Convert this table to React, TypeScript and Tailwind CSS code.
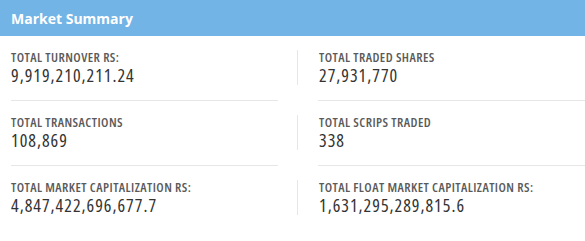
const rows = [
  [
    ["TOTAL TURNOVER RS:", "9,919,210,211.24"],
    ["TOTAL TRADED SHARES", "27,931,770"],
  ],
  [
    ["TOTAL TRANSACTIONS", "108,869"],
    ["TOTAL SCRIPS TRADED", "338"],
  ],
  [
    ["TOTAL MARKET CAPITALIZATION RS:", "4,847,422,696,677.7"],
    ["TOTAL FLOAT MARKET CAPITALIZATION RS:", "1,631,295,289,815.6"],
  ],
] as const;

function Stat({ label, value }: { label: string; value: string }) {
  return (
    <>
      <div className="text-[13px] font-semibold leading-[14px] tracking-[0.45px] text-[#5a5a5a] [font-stretch:semi-condensed]">
        {label}
      </div>
      <div className="text-[18px] leading-[22px] tracking-[1px] text-[#333] [font-stretch:semi-condensed]">{value}</div>
    </>
  );
}

export default function App() {
  return (
    <div className="w-[585px] bg-white font-['Open_Sans',sans-serif]">
      <div className="flex h-[36px] items-center bg-[#72b4e6] px-[11px]">
        <h2 className="text-[14px] font-bold text-white">Market Summary</h2>
      </div>
      <div className="pl-[11px]">
        {rows.map(([left, right], i) => {
          const last = i === rows.length - 1;
          return (
            <div key={left[0]} className="flex">
              <div className={`w-[267px] pt-[14px] pb-[15px] ${last ? "" : "border-b border-[#e6e6e6]"}`}>
                <div className="h-[35px]">
                  <Stat label={left[0]} value={left[1]} />
                </div>
              </div>
              <div className={`ml-[40px] flex-1 pt-[14px] pb-[15px] ${last ? "" : "border-b border-[#e6e6e6]"}`}>
                <div className="-ml-[21px] h-[35px] border-l border-[#e6e6e6] pl-[21px]">
                  <Stat label={right[0]} value={right[1]} />
                </div>
              </div>
            </div>
          );
        })}
      </div>
    </div>
  );
}
